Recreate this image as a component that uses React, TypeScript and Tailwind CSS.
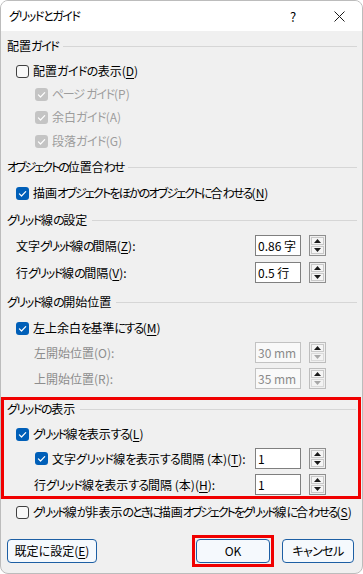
import React from "react";

type CS = "on" | "off" | "dis";

const LK = "tracking-[-0.6px]";
const HK = "tracking-[-1.4px]";

const J = ({ t, k = LK }: { t: string; k?: string }) => {
  const parts = t.split(/([\u3040-\u30ff]+)/);
  return (
    <>
      {parts.map((p, i) =>
        /[\u3040-\u30ff]/.test(p) ? (
          <span key={i} className={k}>
            {p}
          </span>
        ) : (
          <React.Fragment key={i}>{p}</React.Fragment>
        )
      )}
    </>
  );
};

const Check = ({ state }: { state: CS }) => {
  if (state === "off")
    return <span className="inline-block w-[13px] h-[13px] rounded-[3px] border border-[#404040] bg-[#f8f8f8] shrink-0" />;
  return (
    <span
      className={`inline-flex w-[13px] h-[13px] rounded-[3px] shrink-0 items-center justify-center ${
        state === "on" ? "bg-[#005fb8]" : "bg-[#c4c4c4]"
      }`}
    >
      <svg width="13" height="13" viewBox="0 0 13 13">
        <path d="M3.4 6.9 L5.5 9 L9.7 4.7" fill="none" stroke="#fff" strokeWidth="1.2" strokeLinecap="round" strokeLinejoin="round" />
      </svg>
    </span>
  );
};

const K = ({ k }: { k: string }) => (
  <>
    (<span className="underline underline-offset-[2px] decoration-[1px]">{k}</span>)
  </>
);

const Header = ({ t, cls, k = HK }: { t: string; cls: string; k?: string }) => (
  <div className={`flex items-center gap-[5px] ${cls}`}>
    <span className="whitespace-nowrap">
      <J t={t} k={k} />
    </span>
    <div className="flex-1 h-px bg-[#d6d6d6]" />
  </div>
);

const CheckRow = ({ state, children, cls, dim }: { state: CS; children: React.ReactNode; cls: string; dim?: boolean }) => (
  <div className={`flex items-center h-[20px] gap-[4px] whitespace-nowrap ${cls} ${dim ? "text-[#9d9d9d]" : "text-black"}`}>
    <Check state={state} />
    <span>{children}</span>
  </div>
);

const Tri = ({ up, dim }: { up: boolean; dim?: boolean }) => (
  <svg width="7" height="4" viewBox="0 0 7 4">
    <path d={up ? "M0 4 L3.5 0 L7 4 Z" : "M0 0 L3.5 4 L7 0 Z"} fill={dim ? "#a8a8a8" : "#1a1a1a"} />
  </svg>
);

const Spin = ({ value, disabled }: { value: string; disabled?: boolean }) => (
  <div className="flex items-center gap-[8px] shrink-0">
    <div
      className={`w-[46px] h-[21px] border flex items-center pl-[2px] text-[12px] whitespace-nowrap overflow-hidden ${
        disabled ? "border-[#c2c2c2] bg-[#f9f9f9] text-[#8a8a8a]" : "border-[#7f7f7f] bg-white text-black"
      }`}
    >
      {value}
    </div>
    <div className={`w-[17px] h-[21px] border flex flex-col gap-[1px] p-[1px] bg-[#f0f0f0] ${disabled ? "border-[#bdbdbd]" : "border-[#8f8f8f]"}`}>
      <div className="flex-1 flex items-center justify-center bg-[#f5f5f5] border border-[#c9c9c9]">
        <Tri up />
      </div>
      <div className={`flex-1 flex items-center justify-center border ${disabled ? "bg-[#f3f3f3] border-[#dadada]" : "bg-[#f5f5f5] border-[#c9c9c9]"}`}>
        <Tri up={false} dim={disabled} />
      </div>
    </div>
  </div>
);

const SpinRow = ({ label, value, disabled, cls }: { label: React.ReactNode; value: string; disabled?: boolean; cls: string }) => (
  <div className={`flex items-center h-[21px] whitespace-nowrap ${cls}`}>
    <span className={disabled ? "text-[#8d8d8d]" : "text-black"}>{label}</span>
    <div className="ml-auto">
      <Spin value={value} disabled={disabled} />
    </div>
  </div>
);

const Btn = ({ children, w }: { children: React.ReactNode; w: string }) => (
  <div className={`h-[24px] ${w} rounded-[4px] border border-[#1d5fa4] bg-[#f5f9fd] flex items-center justify-center text-black whitespace-nowrap`}>
    {children}
  </div>
);

export default function App() {
  return (
    <div className="w-[363px] h-[574px] bg-white font-['Noto_Sans_CJK_JP','Noto_Sans',sans-serif] [font-feature-settings:'palt'] text-[12px] text-black leading-none">
      <div className="w-full h-full border border-[#bcbcbc] rounded-[8px] overflow-hidden bg-[#f0f0f0] flex flex-col">
        <div className="h-[30px] bg-white flex items-center pl-[8px] shrink-0">
          <span>
            <J t="グリッドとガイド" k={HK} />
          </span>
          <div className="ml-auto w-[46px] h-full flex items-center justify-center text-[13px]">?</div>
          <div className="w-[46px] h-full flex items-center justify-center">
            <svg width="11" height="11" viewBox="0 0 11 11">
              <path d="M0.5 0.5 L10.5 10.5 M10.5 0.5 L0.5 10.5" stroke="#1a1a1a" strokeWidth="1" />
            </svg>
          </div>
        </div>
        <div className="flex flex-col flex-1">
          <Header t="配置ガイド" cls="h-[20px] mt-[5px] pl-[6px] pr-[5px]" />
          <CheckRow state="off" cls="mt-[5px] pl-[15px]">
            <J t="配置ガイドの表示" />
            <K k="D" />
          </CheckRow>
          <CheckRow state="dis" dim cls="mt-[3px] pl-[34px]">
            <J t="ページ ガイド(P)" k="tracking-[-1.3px]" />
          </CheckRow>
          <CheckRow state="dis" dim cls="mt-[3px] pl-[34px]">
            <J t="余白ガイド(A)" />
          </CheckRow>
          <CheckRow state="dis" dim cls="mt-[4px] pl-[34px]">
            <J t="段落ガイド(G)" />
          </CheckRow>
          <Header t="オブジェクトの位置合わせ" k="tracking-[-2px]" cls="h-[20px] mt-[6px] pl-[6px] pr-[5px]" />
          <CheckRow state="on" cls="mt-[6px] pl-[15px]">
            <J t="描画オブジェクトをほかのオブジェクトに合わせる" k="tracking-[-1.8px]" />
            <K k="N" />
          </CheckRow>
          <Header t="グリッド線の設定" cls="h-[20px] mt-[7px] pl-[6px] pr-[5px]" />
          <SpinRow
            cls="mt-[5px] pl-[15px] pr-[36px]"
            label={
              <>
                <J t="文字グリッド線の間隔" k="tracking-[-2.1px]" />
                <K k="Z" />:
              </>
            }
            value="0.86 字"
          />
          <SpinRow
            cls="mt-[6px] pl-[15px] pr-[36px]"
            label={
              <>
                <J t="行グリッド線の間隔" k="tracking-[-1.4px]" />
                <K k="V" />:
              </>
            }
            value="0.5 行"
          />
          <Header t="グリッド線の開始位置" cls="h-[20px] mt-[9px] pl-[6px] pr-[5px]" />
          <CheckRow state="on" cls="mt-[6px] pl-[15px]">
            <J t="左上余白を基準にする" k="tracking-[-1.7px]" />
            <K k="M" />
          </CheckRow>
          <SpinRow cls="mt-[4px] pl-[33px] pr-[36px]" label="左開始位置(O):" value="30 mm" disabled />
          <SpinRow cls="mt-[5px] pl-[33px] pr-[36px]" label="上開始位置(R):" value="35 mm" disabled />

          <div className="mt-[8px] mr-[1px] border-[3px] border-[#f00000] flex flex-col pb-[1px]">
            <Header t="グリッドの表示" cls="h-[18px] pl-[3px] pr-[2px]" />
            <CheckRow state="on" cls="mt-[6px] pl-[12px]">
              <J t="グリッド線を表示する" k="tracking-[-1.8px]" />
              <K k="L" />
            </CheckRow>
            <div className="mt-[4px] flex items-center h-[21px] pl-[31px] pr-[32px] whitespace-nowrap">
              <Check state="on" />
              <span className="ml-[4px]">
                <J t="文字グリッド線を表示する間隔 (本)" />
                <K k="T" />:
              </span>
              <div className="ml-auto">
                <Spin value="1" />
              </div>
            </div>
            <SpinRow
              cls="mt-[5px] pl-[30px] pr-[32px]"
              label={
                <>
                  <J t="行グリッド線を表示する間隔 (本)" k="tracking-[-0.9px]" />
                  <K k="H" />:
                </>
              }
              value="1"
            />
          </div>

          <CheckRow state="off" cls="mt-[3px] pl-[15px]">
            <J t="グリッド線が非表示のときに描画オブジェクトをグリッド線に合わせる" k="tracking-[-2px]" />
            <K k="S" />
          </CheckRow>

          <div className="mt-[13px] h-[32px] flex items-center pl-[6px] pr-[8px]">
            <Btn w="w-[90px]">
              既定に設定
              <K k="E" />
            </Btn>
            <div className="ml-auto border-[3px] border-[#f00000] p-[1px]">
              <Btn w="w-[74px]">OK</Btn>
            </div>
            <div className="ml-[8px]">
              <Btn w="w-[72px]">
                <J t="キャンセル" />
              </Btn>
            </div>
          </div>
        </div>
      </div>
    </div>
  );
}
